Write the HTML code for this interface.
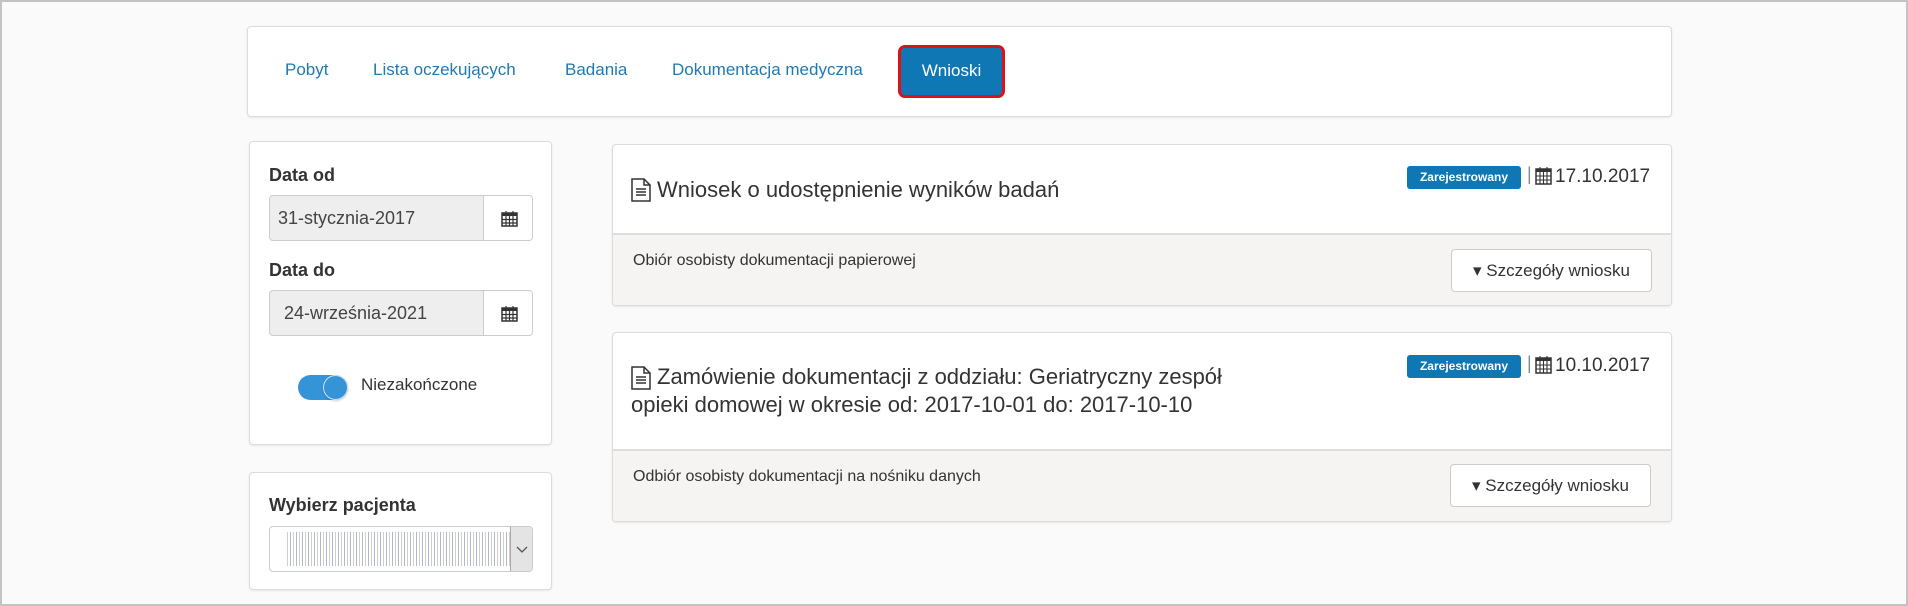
<!DOCTYPE html>
<html><head><meta charset="utf-8"><style>
*{box-sizing:border-box;margin:0;padding:0}
body{width:1908px;height:606px;background:#fafafa;font-family:"Liberation Sans",sans-serif;color:#333;position:relative;overflow:hidden}
.frame{position:absolute;left:0;top:0;width:1908px;height:606px;border:2px solid #c3c3c3;border-top-width:2px}
.card{position:absolute;background:#fff;border:1px solid #dcdcdc;border-radius:4px;box-shadow:0 1px 2px rgba(0,0,0,.08)}
.a{position:absolute;white-space:nowrap}
.nav{color:#1f7ab3;font-size:17px;top:60px}
.inp{position:absolute;left:269px;width:264px;height:46px;border:1px solid #ccc;border-radius:4px;background:#eee;overflow:hidden}
.inp .t{position:absolute;left:8px;top:12px;font-size:18px;color:#444}
.inp .ad{position:absolute;left:213px;top:0;width:51px;height:100%;background:#fff;border-left:1px solid #ccc}
.lbl{font-weight:bold;font-size:18px;color:#333}
.foot{position:absolute;left:0;right:0;bottom:0;background:#f5f4f2;border-top:2px solid #ddd;border-radius:0 0 4px 4px}
.btn{position:absolute;width:201px;height:43px;background:#fff;border:1px solid #ccc;border-radius:4px;font-size:17px;color:#333;text-align:center;line-height:41px}
.badge{position:absolute;width:114px;height:23px;background:#0f78b4;color:#fff;border-radius:3px;font-size:12px;font-weight:bold;text-align:center;line-height:23px}
.title{font-size:22px;color:#333}
</style></head><body>
<div class="frame"></div>

<div class="card" style="left:247px;top:26px;width:1425px;height:91px"></div>
<div class="a nav" style="left:285px">Pobyt</div>
<div class="a nav" style="left:373px">Lista oczekujących</div>
<div class="a nav" style="left:565px">Badania</div>
<div class="a nav" style="left:672px">Dokumentacja medyczna</div>
<div class="a" style="left:898px;top:45px;width:107px;height:53px;background:#0f78b4;border:3px solid #e0101a;border-radius:7px;color:#fff;font-size:17px;text-align:center;line-height:46px">Wnioski</div>

<div class="card" style="left:249px;top:141px;width:303px;height:304px"></div>
<div class="a lbl" style="left:269px;top:165px">Data od</div>
<div class="inp" style="top:195px"><span class="t">31-stycznia-2017</span><div class="ad"><svg style="position:absolute;left:17px;top:14px" width="17" height="17" viewBox="0 0 17 17"><rect x="1" y="3" width="15" height="13" fill="none" stroke="#333" stroke-width="1.5"/><rect x="1" y="3" width="15" height="3" fill="#333"/><path d="M5 1v4M12 1v4M1 9.5h15M1 13h15M5 6v10M8.5 6v10M12 6v10" stroke="#333" stroke-width="1.2"/></svg></div></div>
<div class="a lbl" style="left:269px;top:260px">Data do</div>
<div class="inp" style="top:290px"><span class="t" style="left:14px">24-września-2021</span><div class="ad"><svg style="position:absolute;left:17px;top:14px" width="17" height="17" viewBox="0 0 17 17"><rect x="1" y="3" width="15" height="13" fill="none" stroke="#333" stroke-width="1.5"/><rect x="1" y="3" width="15" height="3" fill="#333"/><path d="M5 1v4M12 1v4M1 9.5h15M1 13h15M5 6v10M8.5 6v10M12 6v10" stroke="#333" stroke-width="1.2"/></svg></div></div>
<div class="a" style="left:298px;top:375px;width:50px;height:25px;background:#3594d8;border-radius:13px"></div>
<div class="a" style="left:323px;top:375px;width:25px;height:25px;background:#3594d8;border:1px solid #d0e4f3;border-radius:50%;box-shadow:0 1px 2px rgba(0,0,0,.2)"></div>
<div class="a" style="left:361px;top:375px;font-size:17px">Niezakończone</div>

<div class="card" style="left:249px;top:472px;width:303px;height:118px"></div>
<div class="a lbl" style="left:269px;top:495px">Wybierz pacjenta</div>
<div class="a" style="left:269px;top:526px;width:264px;height:46px;border:1px solid #ccc;border-radius:4px;background:#fff;overflow:hidden">
<div style="position:absolute;left:17px;top:5px;width:223px;height:34px;background:repeating-linear-gradient(90deg,#c9c2bd 0 1px,#fff 1px 3px,#9aa9c0 3px 4px,#fff 4px 6px),#fff;opacity:.8"></div>
<div style="position:absolute;left:240px;top:0;width:24px;height:100%;background:#e4e4e4;border-left:1px solid #aaa"></div>
<svg style="position:absolute;left:246px;top:19px" width="12" height="8"><path d="M1 1l5 5 5-5" fill="none" stroke="#555" stroke-width="1.3"/></svg></div>

<div class="card" style="left:612px;top:144px;width:1060px;height:162px"><div class="foot" style="height:72px"></div></div>
<svg class="a" style="left:631px;top:178px" width="20" height="24" viewBox="0 0 20 24"><path d="M1 1h12l6 6v16H1z" fill="#fff" stroke="#333" stroke-width="1.5"/><path d="M13 1v6h6" fill="none" stroke="#333" stroke-width="1.5"/><path d="M5 11h10M5 14h10M5 17h10" stroke="#333" stroke-width="1.4"/></svg>
<div class="a title" style="left:657px;top:177px">Wniosek o udostępnienie wyników badań</div>
<div class="badge" style="left:1407px;top:166px">Zarejestrowany</div>
<div class="a" style="left:1527px;top:164px;color:#888;font-size:18px">|</div>
<svg class="a" style="left:1535px;top:166px" width="17" height="19" viewBox="0 0 17 19"><rect x="1" y="3" width="15" height="15" fill="none" stroke="#333" stroke-width="1.5"/><rect x="1" y="3" width="15" height="3" fill="#333"/><path d="M5 1v4M12 1v4M1 10h15M1 14h15M5 6v12M8.5 6v12M12 6v12" stroke="#333" stroke-width="1.1"/></svg>
<div class="a" style="left:1555px;top:166px;font-size:19px">17.10.2017</div>
<div class="a" style="left:633px;top:252px;font-size:16px">Obiór osobisty dokumentacji papierowej</div>
<div class="btn" style="left:1451px;top:249px">▾ Szczegóły wniosku</div>

<div class="card" style="left:612px;top:332px;width:1060px;height:190px"><div class="foot" style="height:72px"></div></div>
<svg class="a" style="left:631px;top:366px" width="20" height="24" viewBox="0 0 20 24"><path d="M1 1h12l6 6v16H1z" fill="#fff" stroke="#333" stroke-width="1.5"/><path d="M13 1v6h6" fill="none" stroke="#333" stroke-width="1.5"/><path d="M5 11h10M5 14h10M5 17h10" stroke="#333" stroke-width="1.4"/></svg>
<div class="a title" style="left:657px;top:364px">Zamówienie dokumentacji z oddziału: Geriatryczny zespół</div>
<div class="a title" style="left:631px;top:392px">opieki domowej w okresie od: 2017-10-01 do: 2017-10-10</div>
<div class="badge" style="left:1407px;top:355px">Zarejestrowany</div>
<div class="a" style="left:1527px;top:353px;color:#888;font-size:18px">|</div>
<svg class="a" style="left:1535px;top:355px" width="17" height="19" viewBox="0 0 17 19"><rect x="1" y="3" width="15" height="15" fill="none" stroke="#333" stroke-width="1.5"/><rect x="1" y="3" width="15" height="3" fill="#333"/><path d="M5 1v4M12 1v4M1 10h15M1 14h15M5 6v12M8.5 6v12M12 6v12" stroke="#333" stroke-width="1.1"/></svg>
<div class="a" style="left:1555px;top:355px;font-size:19px">10.10.2017</div>
<div class="a" style="left:633px;top:468px;font-size:16px">Odbiór osobisty dokumentacji na nośniku danych</div>
<div class="btn" style="left:1450px;top:464px">▾ Szczegóły wniosku</div>
</body></html>
